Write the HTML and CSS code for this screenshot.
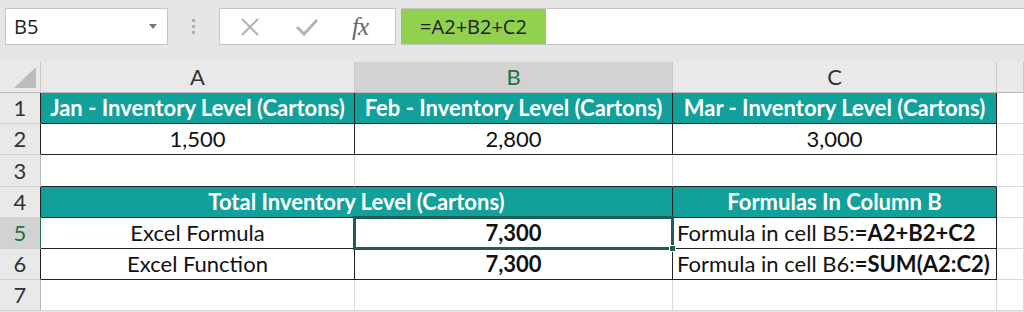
FILE: index.html
```html
<!DOCTYPE html>
<html lang="en">
<head>
  <meta charset="UTF-8" />
  <title>Inventory Level – Excel Formula</title>
  <link rel="stylesheet" href="styles.css">
</head>
<body>
<!-- ── Formula bar ───────────────────────── -->
<div class="topbar">
  <div class="namebox">
    <span class="ref">B5</span>
    <span class="caret"></span>
  </div>
  <div class="grip"><i></i><i></i><i></i></div>
  <div class="fxbox">
    <svg class="ico" width="22" height="22" viewBox="0 0 22 22"><path d="M3 3 L19 19 M19 3 L3 19" stroke="#b4b4b4" stroke-width="2.2" fill="none"/></svg>
    <svg class="ico" width="24" height="22" viewBox="0 0 24 22"><path d="M2 11 L9 18 L22 4" stroke="#b4b4b4" stroke-width="3" fill="none"/></svg>
    <span class="fx">fx</span>
  </div>
  <div class="formula"><span class="hl">=A2+B2+C2</span></div>
</div>

<!-- ── Sheet ───────────────────────── -->
<table class="sheet">
  <colgroup>
    <col class="c-rh"><col class="c-a"><col class="c-b"><col class="c-c"><col class="c-d">
  </colgroup>
  <tr class="colhead">
    <th class="corner"><span class="tri"></span></th>
    <th>A</th>
    <th class="sel">B</th>
    <th>C</th>
    <th></th>
  </tr>
  <tr>
    <th class="rh bx">1</th>
    <td class="hd bx">Jan - Inventory Level (Cartons)</td>
    <td class="hd bx">Feb - Inventory Level (Cartons)</td>
    <td class="hd bx">Mar - Inventory Level (Cartons)</td>
    <td></td>
  </tr>
  <tr>
    <th class="rh bx">2</th>
    <td class="num bx">1,500</td>
    <td class="num bx">2,800</td>
    <td class="num bx">3,000</td>
    <td></td>
  </tr>
  <tr class="r3">
    <th class="rh">3</th>
    <td class="bb"></td>
    <td class="bb"></td>
    <td class="bb"></td>
    <td></td>
  </tr>
  <tr>
    <th class="rh bx">4</th>
    <td class="hd bx" colspan="2">Total Inventory Level (Cartons)</td>
    <td class="hd bx">Formulas In Column B</td>
    <td></td>
  </tr>
  <tr>
    <th class="rh bx rsel">5</th>
    <td class="num bx">Excel Formula</td>
    <td class="num bx strong cur">7,300</td>
    <td class="txt bx">Formula in cell B5:<b>=A2+B2+C2</b></td>
    <td></td>
  </tr>
  <tr>
    <th class="rh bx">6</th>
    <td class="num bx">Excel Function</td>
    <td class="num bx strong">7,300</td>
    <td class="txt bx">Formula in cell B6:<b>=SUM(A2:C2)</b></td>
    <td></td>
  </tr>
  <tr>
    <th class="rh">7</th>
    <td></td>
    <td></td>
    <td></td>
    <td></td>
  </tr>
</table>
</body>
</html>
```

FILE: styles.css
```css
html,body{margin:0;padding:0;background:#e6e6e6;overflow:hidden;}
body{width:1024px;height:312px;font-family:'Lato',sans-serif;}

/* formula bar */
.topbar{height:62px;box-sizing:border-box;padding:8px 0 0 5px;display:flex;align-items:flex-start;font-family:'Open Sans',sans-serif;}
.namebox{width:163px;height:37px;box-sizing:border-box;background:#fff;border:1px solid #c6c6c6;display:flex;align-items:center;justify-content:space-between;padding:0 10px 0 8px;}
.ref{font-size:20px;color:#222;}
.caret{width:0;height:0;border-left:4px solid transparent;border-right:4px solid transparent;border-top:5px solid #777;}
.grip{width:51px;height:37px;display:flex;flex-direction:column;align-items:center;justify-content:center;gap:3px;}
.grip i{display:block;width:3px;height:3px;background:#b0b0b0;}
.fxbox{width:177px;height:37px;box-sizing:border-box;background:#fff;border:1px solid #c6c6c6;display:flex;align-items:center;padding:0 0 0 19px;}
.fxbox .ico{margin-right:34px;}
.fx{font-family:'Liberation Serif',serif;font-style:italic;font-size:25px;color:#666;margin-left:-1px;letter-spacing:-1px;}
.formula{flex:1;margin-left:5px;height:37px;box-sizing:border-box;background:#fff;border-top:1px solid #c6c6c6;border-bottom:1px solid #c6c6c6;}
.hl{display:flex;align-items:center;justify-content:center;width:145px;height:100%;background:#92d050;font-size:20px;color:#222;}

/* sheet grid */
.sheet{border-collapse:separate;border-spacing:0;table-layout:fixed;width:1024px;background:#fff;font-size:22px;}
.c-rh{width:41px;}
.c-a{width:314px;}
.c-b{width:318px;}
.c-c{width:324px;}
.c-d{width:27px;}
.sheet th,.sheet td{height:31px;box-sizing:border-box;padding:0;border:0;border-right:1px solid #d9d9d9;border-bottom:1px solid #d9d9d9;white-space:nowrap;overflow:hidden;line-height:30px;}
.sheet tr.r3 th,.sheet tr.r3 td{height:32px;}
.colhead th{background:#e9e9e9;font-weight:normal;color:#333;border-right-color:#c9c9c9;border-bottom-color:#b9b9b9;text-align:center;}
.colhead th.sel{background:#d2d2d2;color:#217346;}
.corner{position:relative;}
.tri{position:absolute;right:4px;bottom:4px;width:0;height:0;border-left:22px solid transparent;border-bottom:21px solid #bcbcbc;}
.rh{background:#e9e9e9;font-weight:normal;color:#333;text-align:center;border-right-color:#b9b9b9 !important;border-bottom-color:#d0d0d0 !important;}
.rh.bx{border-right-color:#222 !important;}
.rh.rsel{background:#d2d2d2;color:#217346;border-right-color:#217346 !important;}
.sheet td.bx{border-right-color:#222;border-bottom-color:#222;}
.sheet td.bb{border-bottom-color:#222;}
.hd{background:#12a09a;color:#fff;font-weight:bold;text-align:center;}
.num{text-align:center;color:#111;}
.strong{font-weight:bold;}
.txt{text-align:left;padding-left:4px !important;color:#111;}
.txt b{font-weight:bold;}

/* active cell */
.sheet td.cur{position:relative;overflow:visible;}
.cur::after{content:"";position:absolute;left:-2px;top:-2px;right:-2px;bottom:-2px;border:3px solid #1f5d55;z-index:1;}
.cur::before{content:"";position:absolute;right:-4px;bottom:-4px;width:5px;height:5px;background:#1f5d55;border:1px solid #fff;z-index:2;}
```
